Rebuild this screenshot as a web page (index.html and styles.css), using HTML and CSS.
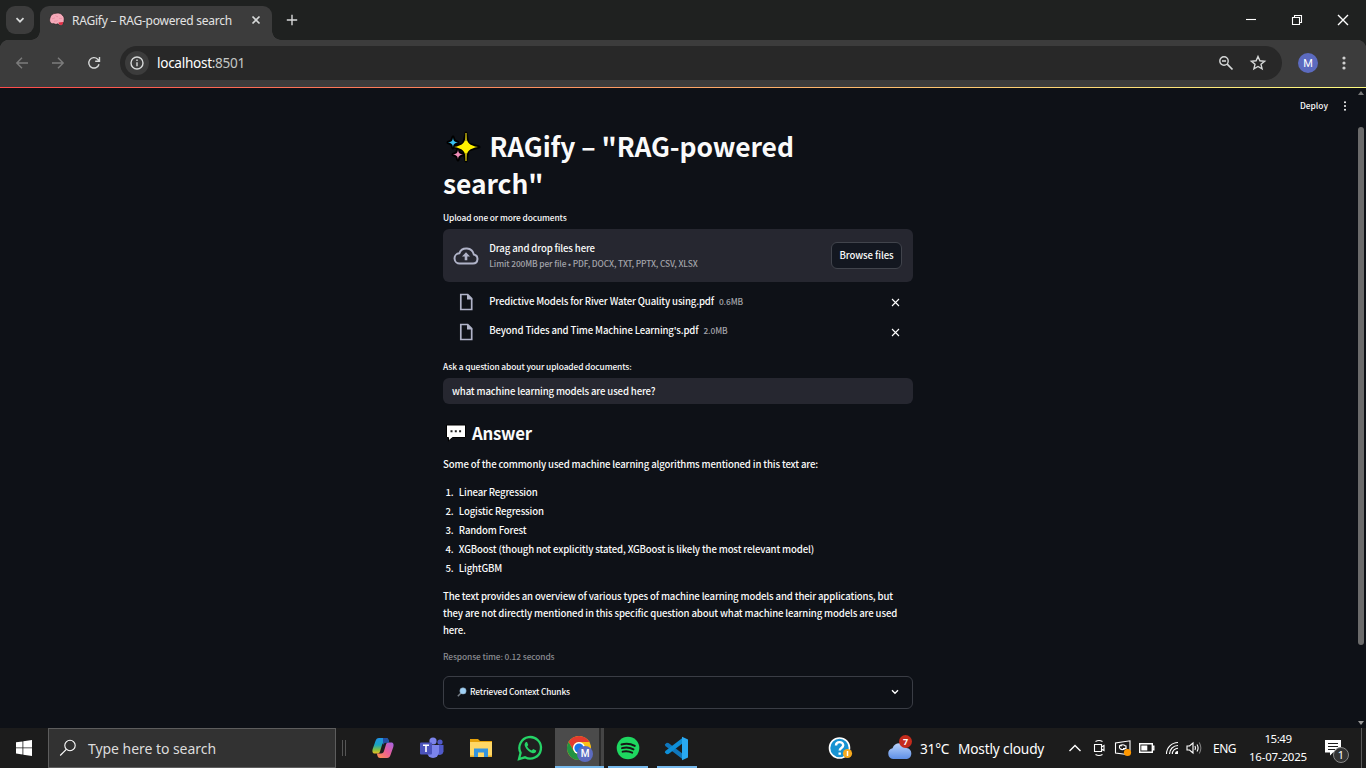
FILE: index.html
```html
<!DOCTYPE html>
<html lang="en">
<head>
<meta charset="utf-8">
<title>RAGify – RAG-powered search</title>
<link rel="stylesheet" href="styles.css">
</head>
<body>
<div class="screen">
  <header class="titlebar">
    <div class="tab-menu"><svg width="10" height="10" viewBox="0 0 10 10"><path d="M1.500 3.200 5 6.700 8.500 3.200" class="line bold"/></svg></div>
    <div class="tab">
      <svg class="brain" width="16" height="16" viewBox="0 0 16 16"><path d="M1.500 10.500C.3 9 .5 7.500 1 6 1.500 3 4 1.300 7 1.300c3-.8 5.800.5 6.500 2.200 1.500 1 2 3 1.500 5 .2 1.200-.3 2-1 2.500 0 1.800-1.300 2.800-3 2.300L8.800 11.800c-1.500.8-3 .5-4-.3-1.200.5-2.500.2-3.300-1Z" fill="#f6a9b9" stroke="#1c1c1c" stroke-width=".6"/><path d="m9.500 10.500 4.500-.5c.3 2-.8 3.200-2 3-1.200 0-2-.7-2.500-2.500Z" fill="#dd2e44"/><path d="M3 7c1-1 2 0 3-1.500M6.500 3.500c1 .5 1 1.500 2.500 1M5 9.500c1.500-1 2 .2 3.500-1M10 6.500c1-.5 1.500.5 3-.3" fill="none" stroke="#e58a9e" stroke-width=".8"/></svg>
      <span class="tab-title">RAGify – RAG-powered search</span>
      <svg class="tab-x" width="10" height="10" viewBox="0 0 10 10"><path d="m1.500 1.500 7 7m0-7-7 7" class="line bold"/></svg>
    </div>
    <svg class="new-tab" width="12" height="12" viewBox="0 0 12 12"><path d="M6 .8v10.400M.8 6h10.400" class="line"/></svg>
    <div class="win">
      <svg width="12" height="12" viewBox="0 0 12 12"><path d="M1 5.500h10" class="line white thin"/></svg>
      <svg width="12" height="12" viewBox="0 0 12 12"><path d="M1.500 3.500h7v7h-7zM3.500 3.500v-2h7v7h-2" class="line white thin"/></svg>
      <svg width="12" height="12" viewBox="0 0 12 12"><path d="m1 1 10 10m0-10L1 11" class="line white"/></svg>
    </div>
  </header>
  <nav class="toolbar">
    <svg width="14" height="14" viewBox="0 0 14 14"><path d="M13 7H2m5-5.200L1.800 7 7 12.200" class="line dim"/></svg>
    <svg width="14" height="14" viewBox="0 0 14 14"><path d="M1 7h11M7 1.800 12.200 7 7 12.200" class="line dim"/></svg>
    <svg width="14" height="14" viewBox="0 0 14 14"><path d="M12 8.200a5.200 5.200 0 1 1-1.300-5L12.400 5M12.500 1v4.300H8.200" class="line"/></svg>
    <div class="omnibox">
      <span class="site"><svg width="14" height="14" viewBox="0 0 14 14"><circle cx="7" cy="7" r="6" class="line"/><path d="M7 6.200v4M7 3.600v1.500" class="line"/></svg></span>
      <span class="url">localhost<span class="port">:8501</span></span>
      <svg class="zoom" width="16" height="16" viewBox="0 0 16 16"><circle cx="6" cy="6" r="4.200" class="line"/><path d="M9.200 9.200 14.500 14.500M4 6h4" class="line bold"/></svg>
      <svg width="16" height="16" viewBox="0 0 16 16"><path d="m8 1.500 1.900 4.300 4.700.4-3.600 3.100 1.100 4.600L8 11.500l-4.100 2.400L5 9.300 1.400 6.200l4.700-.4Z" class="line"/></svg>
    </div>
    <span class="avatar">M</span>
    <svg class="kebab" width="4" height="16" viewBox="0 0 4 16"><circle cx="2" cy="3" r="1.600"/><circle cx="2" cy="8" r="1.600"/><circle cx="2" cy="13" r="1.600"/></svg>
  </nav>
  <main class="page">
    <div class="app-head"><span class="deploy">Deploy</span><svg width="4" height="10" viewBox="0 0 4 10"><circle cx="2" cy="1.300" r="1"/><circle cx="2" cy="5" r="1"/><circle cx="2" cy="8.700" r="1"/></svg></div>
    <div class="scroll"><i class="up"></i><i class="thumb"></i><i class="down"></i></div>
    <div class="column">
      <h1><svg class="sparkles" width="34" height="34" viewBox="0 0 34 34"><g stroke="#000" stroke-width="3" stroke-linejoin="round"><path d="M20 2 22 13 33 16 22 19 20 30 17.500 19 9 16 17.500 13Z"/><path d="m7 6 1.500 4L12 11.500 8.500 13 7 17l-1.500-4L2 11.500 5.500 10ZM12 18l1.500 4L17 23.500 13.500 25 12 29l-1.500-4L7 23.500 10.500 22Z"/></g><path d="M20 4c.8 8 3.500 10.500 12 12-8.500 1.500-11.200 4-12 12-.8-8-3.500-10.500-12-12 8.500-1.500 11.200-4 12-12Z" fill="#fff100"/><path d="M19.200 2h1.600v8h-1.600zM19.200 22h1.600v8h-1.600z" fill="#a89b0c"/><path d="M7 6.500c.4 3.500 1.500 4.500 5 5-3.500.5-4.600 1.500-5 5-.4-3.500-1.500-4.500-5-5 3.500-.5 4.600-1.500 5-5Z" fill="#37c2f2"/><path d="M12 18.500c.4 3.500 1.500 4.500 5 5-3.500.5-4.600 1.500-5 5-.4-3.500-1.500-4.500-5-5 3.500-.5 4.600-1.500 5-5Z" fill="#f08cb8"/></svg>RAGify – "RAG-powered<br>search"</h1>
      <p class="label">Upload one or more documents</p>
      <section class="drop">
        <svg width="26" height="20" viewBox="0 0 26 20"><path d="M7 17.500h13a4.600 4.600 0 0 0 .8-9.100A7.600 7.600 0 0 0 6.300 7.300 5.100 5.100 0 0 0 7 17.500Z" fill="none" stroke="#b0b3c8" stroke-width="2"/><path d="M13 6.200 17 10.500h-2.700v3.700h-2.600v-3.700H9Z" fill="#b0b3c8"/></svg>
        <div class="drop-text"><span class="body">Drag and drop files here</span><span class="small">Limit 200MB per file • PDF, DOCX, TXT, PPTX, CSV, XLSX</span></div>
        <button class="browse">Browse files</button>
      </section>
      <div class="files">
        <div class="file"><svg width="14" height="18" viewBox="0 0 14 18"><path d="M1.800 1.500h6.900l4 4v11H1.800Z" class="doc"/><path d="M8 1v5.500h5.500Z" fill="#b0b3c8"/></svg><span class="body">Predictive Models for River Water Quality using.pdf</span><span class="small">0.6MB</span><svg class="x" width="9" height="9" viewBox="0 0 9 9"><path d="m1 1 7 7m0-7L1 8" class="line white thin"/></svg></div>
        <div class="file"><svg width="14" height="18" viewBox="0 0 14 18"><path d="M1.800 1.500h6.900l4 4v11H1.800Z" class="doc"/><path d="M8 1v5.500h5.500Z" fill="#b0b3c8"/></svg><span class="body">Beyond Tides and Time Machine Learning's.pdf</span><span class="small">2.0MB</span><svg class="x" width="9" height="9" viewBox="0 0 9 9"><path d="m1 1 7 7m0-7L1 8" class="line white thin"/></svg></div>
      </div>
      <p class="label ask">Ask a question about your uploaded documents:</p>
      <div class="input"><span class="body">what machine learning models are used here?</span></div>
      <h2><svg width="22" height="18" viewBox="0 0 22 18"><path d="M1.500 1h19v12.500H7.500L3.500 17v-3.500h-2Z" fill="#fff" stroke="#000" stroke-width="1"/><path d="M5.500 6.200h2v2h-2zm4.300 0h2v2h-2zm4.300 0h2v2h-2z" fill="#222"/></svg>Answer</h2>
      <p class="para">Some of the commonly used machine learning algorithms mentioned in this text are:</p>
      <ol>
        <li>Linear Regression</li>
        <li>Logistic Regression</li>
        <li>Random Forest</li>
        <li>XGBoost (though not explicitly stated, XGBoost is likely the most relevant model)</li>
        <li>LightGBM</li>
      </ol>
      <p class="para">The text provides an overview of various types of machine learning models and their applications, but<br>they are not directly mentioned in this specific question about what machine learning models are used<br>here.</p>
      <p class="response">Response time: 0.12 seconds</p>
      <div class="expander"><svg width="10" height="10" viewBox="0 0 10 10"><path d="M.8 9.200 4.500 5.500" stroke="#777f88" stroke-width="1.500"/><circle cx="6" cy="3.900" r="3.200" fill="#9fd0f5" stroke="#7e95a8" stroke-width=".5"/></svg><span>Retrieved Context Chunks</span><svg class="chev" width="8" height="6" viewBox="0 0 8 6"><path d="m1 1.300 3 3 3-3" class="line white"/></svg></div>
    </div>
  </main>
  <footer class="taskbar">
    <div class="start"><svg width="16" height="16" viewBox="0 0 16 16"><path d="M0 2.300 6.500 1.400V7.500H0zM7.300 1.300 16 0v7.500H7.300zM0 8.300h6.500v6.200L0 13.600zM7.300 8.300H16V16l-8.700-1.300z" fill="#fff"/></svg></div>
    <div class="search"><svg width="18" height="18" viewBox="0 0 18 18"><circle cx="11" cy="6.500" r="5.200" class="line white thin"/><path d="M7.300 10.300 1.200 16.500" class="line white thin"/></svg><span>Type here to search</span></div>
    <i class="grip"></i>
    <div class="apps">
      <div class="app"><svg width="24" height="24" viewBox="0 0 24 24"><defs><linearGradient id="ca" x1="0" y1="0" x2="0" y2="1"><stop offset="0" stop-color="#2093e8"/><stop offset=".45" stop-color="#1ba5be"/><stop offset=".75" stop-color="#7fbf45"/><stop offset="1" stop-color="#ecc020"/></linearGradient><linearGradient id="cb" x1="1" y1="0" x2="0" y2="1"><stop offset="0" stop-color="#a164e8"/><stop offset=".5" stop-color="#ea5d96"/><stop offset="1" stop-color="#ff9548"/></linearGradient></defs><path d="M8 2h7c1.500 0 2 .8 2.500 2l.7 2.500H14c-2 0-2.500 1-3 2.500L9 15.500c-.5 1.500-1.200 2-2.500 2H4c-2.500 0-3-2-2.300-4.500L4.500 5C5.200 3 6 2 8 2Z" fill="url(#ca)"/><path d="M16 22H9c-1.500 0-2-.8-2.500-2l-.6-2.500H10c2 0 2.500-1 3-2.500l2-6.500c.5-1.500 1.200-2 2.500-2H20c2.500 0 3 2 2.300 4.500L19.500 19c-.7 2-1.500 3-3.500 3Z" fill="url(#cb)"/><path d="M12 2h3c1.500 0 2 .8 2.500 2l.7 2.500H14L12 9Z" fill="#234fa5"/></svg></div>
      <div class="app"><svg width="24" height="24" viewBox="0 0 24 24"><circle cx="20" cy="6" r="2.600" fill="#5059c9"/><circle cx="13" cy="5" r="3.600" fill="#7b83eb"/><path d="M16 9h7.500v6.500a4 4 0 0 1-7 2Z" fill="#5059c9"/><path d="M7 9h12v7a6 6 0 0 1-12 0Z" fill="#7b83eb"/><rect y="6.500" width="12" height="12" rx="1" fill="#4b53bc"/><path d="M3 9.300h6M6 9.300V16" stroke="#fff" stroke-width="1.600"/></svg></div>
      <div class="app"><svg width="24" height="24" viewBox="0 0 24 24"><path d="M1 3h8l2 2h12v4H1z" fill="#e5a10a"/><path d="M1 6h22v15H1z" fill="#ffd765"/><path d="M5 12.500h14V21h-4v-4.500H9V21H5z" fill="#3494df"/><path d="M1 19.500h4V21H1zM19 19.500h4V21h-4z" fill="#e8ad28"/></svg></div>
      <div class="app"><svg width="26" height="26" viewBox="0 0 26 26"><path d="m2 24 1.600-6.200A10.800 10.800 0 1 1 8 22.300Z" fill="#202020" stroke="#25d366" stroke-width="2.300"/><path d="M9 7c-1.500 1-1.800 2.800-.8 4.800 1.500 3.200 4.200 5.500 7.500 6.400 1.800.4 3.600-.8 3.500-2.700l-3-1.500-1.500 1.500c-2-.7-3.600-2.200-4.500-4l1.100-1.500L10 7Z" fill="#25d366"/></svg></div>
      <div class="app active"><svg width="26" height="26" viewBox="0 0 26 26"><circle cx="13" cy="13" r="12" fill="#fbc116"/><path d="M2.600 7A12 12 0 0 1 23.400 7H13a6 6 0 0 0-5.200 9Z" fill="#e33b2e"/><path d="M2.600 7A12 12 0 0 0 13 25l5.200-9a6 6 0 0 1-10.400 0Z" fill="#229342"/><circle cx="13" cy="13" r="6" fill="#fff"/><circle cx="13" cy="13" r="4.600" fill="#1a73e8"/></svg><b class="badge">M</b></div>
      <div class="app open"><svg width="24" height="24" viewBox="0 0 24 24"><circle cx="12" cy="12" r="11.300" fill="#1ed760"/><path d="M5.500 8.500q7-2 13.300 1.400M6 12.200q6-1.700 11.500 1.200M6.600 15.700q5-1.200 9.600 1" fill="none" stroke="#161616" stroke-width="1.900" stroke-linecap="round"/></svg></div>
      <div class="app open"><svg width="25" height="25" viewBox="0 0 25 25"><path d="M.8 8.500 2.800 6.800 4.500 7 19 18v5.500L1.300 10Z" fill="#0f77bd"/><path d="M.8 16.500 2.800 18.200 4.500 18 19 7V1.500L1.300 15Z" fill="#0e8fd8"/><path d="m18 .8 6 2.700v18l-6 2.700Z" fill="#29a9f2"/></svg></div>
    </div>
    <div class="tray">
      <svg class="help" width="25" height="25" viewBox="0 0 25 25"><circle cx="11.500" cy="12" r="10" fill="#1793d2" stroke="#fff" stroke-width="1.600"/><path d="M8 9.500C8 5 15.200 5 15.200 9.300c0 2.700-3.500 2.700-3.500 5.200m0 2v2.300" fill="none" stroke="#fff" stroke-width="2.400"/><circle cx="19.500" cy="17.500" r="4.600" fill="#f7a91c"/><path d="M19.500 15v5" stroke="#fff" stroke-width="1.500"/></svg>
      <div class="weather"><svg width="26" height="24" viewBox="0 0 26 24"><defs><linearGradient id="cl" x1="0" y1="0" x2="0" y2="1"><stop offset="0" stop-color="#b9d3fb"/><stop offset="1" stop-color="#5e8fe6"/></linearGradient></defs><path d="M6 23a5.500 5.500 0 0 1-.5-10.800A7.500 7.500 0 0 1 19.500 12 5.600 5.600 0 0 1 20 23Z" fill="url(#cl)"/></svg><b class="alert">7</b></div>
      <span class="temp">31°C</span><span class="cond">Mostly cloudy</span>
      <svg class="caret" width="14" height="10" viewBox="0 0 14 10"><path d="m1.500 8 5.500-5.500L12.500 8" class="line white"/></svg>
      <svg class="meet" width="12" height="18" viewBox="0 0 12 18"><path d="M1.500 5.500h7v7h-7zM8.500 8l2.500-1.500v5L8.500 10M2.500 2.500q3.500-2 7 0M2.500 15.500q3.500 2 7 0" class="line white thin"/></svg>
      <svg class="upd" width="18" height="18" viewBox="0 0 18 18"><path d="M13 15.500 1.500 14V4L16 1.800v10M5.500 9.500V6.800h2.700M12 6.500v3H9M5.500 7q3-2.500 6 0M6 9.500q2.500 2.500 6-.5" class="line white thin"/><circle cx="13.500" cy="13.500" r="3.600" fill="#ff9800"/></svg>
      <svg class="bat" width="16" height="10" viewBox="0 0 16 10"><path d="M.7.7h12.600v8.600H.7zM13.500 3.200h1.300v3.600h-1.300" class="line white"/><path d="M2.300 2.500h6v5h-6z" fill="#fff"/></svg>
      <svg class="wifi" width="14" height="14" viewBox="0 0 14 14"><path d="M1.500 13A11.500 11.500 0 0 1 13 1.500M4.500 13A8.500 8.500 0 0 1 13 4.500M7.300 13A5.700 5.700 0 0 1 13 7.300" class="line white thin"/><path d="M10 13a3 3 0 0 1 3-3v3Z" fill="#fff"/></svg>
      <svg class="vol" width="17" height="14" viewBox="0 0 17 14"><path d="M1 5h2.500L7 2v10L3.500 9H1zM9 5q1 2 0 4M11 3.500q2.200 3.500 0 7" class="line white thin"/><path d="M13.200 1.500q3.300 5.500 0 11" class="line dim thin"/></svg>
      <span class="lang">ENG</span>
      <div class="clock"><span class="time">15:49</span><span>16-07-2025</span></div>
      <div class="notes"><svg width="16" height="16" viewBox="0 0 16 16"><path d="M0 0h16v12.500H8L5 15.500v-3H0Z" fill="#fff"/><path d="M3 3.500h10M3 6.500h10M3 9.500h7" stroke="#1c1c1c" stroke-width="1.200"/></svg><b class="count">1</b></div>
      <i class="peek"></i>
    </div>
  </footer>
</div>
</body>
</html>
```
FILE: styles.css
```css
*, ::before, ::after { box-sizing: border-box; }
body { margin: 0; background: #0e1117; }
svg { display: block; flex: none; overflow: visible; }
h1, h2, p, ol { margin: 0; padding: 0; }
.screen { width: 1366px; height: 768px; overflow: hidden; display: flex; flex-direction: column; font-family: "Noto Sans", sans-serif; color: #fff; white-space: nowrap; }
.line { fill: none; stroke: #d7d9d9; stroke-width: 1.4; }
.bold { stroke-width: 1.7; }
.thin { stroke-width: 1.1; }
.white { stroke: #fff; }
.dim { stroke: #7c7c7c; }

.titlebar { height: 40px; flex: none; background: #1f2120; display: flex; align-items: center; }
.tab-menu { width: 28px; height: 28px; margin-left: 6px; border-radius: 9px; background: #3c3c3c; display: grid; place-items: center; }
.tab { position: relative; width: 232px; height: 34px; margin: 6px 0 0 6px; padding: 0 11px 6px 9px; border-radius: 9px 9px 0 0; background: #3c3c3c; display: flex; align-items: center; }
.tab::before, .tab::after { content: ""; position: absolute; bottom: 0; width: 9px; height: 9px; }
.tab::before { right: 100%; background: radial-gradient(circle at 0 0, transparent 8.5px, #3c3c3c 9px); }
.tab::after { left: 100%; background: radial-gradient(circle at 100% 0, transparent 8.5px, #3c3c3c 9px); }
.tab-title { margin: 1px 0 0 7px; font-size: 12px; line-height: 16px; letter-spacing: -0.238px; color: #e3e3e3; }
.tab-x { margin-left: auto; }
.new-tab { margin-left: 14px; }
.win { margin-left: auto; padding-right: 17px; display: flex; gap: 34px; }

.toolbar { height: 47px; flex: none; background: radial-gradient(circle at 9px 9px, #3c3c3c 9px, #1f2120 9.5px) 0 0 / 9px 9px no-repeat, radial-gradient(circle at 0 9px, #3c3c3c 9px, #1f2120 9.5px) 100% 0 / 9px 9px no-repeat, #3c3c3c; display: flex; align-items: center; padding: 0 20px 1px 15px; }
.toolbar > svg + svg { margin-left: 22px; }
.toolbar > svg.kebab { margin-left: 24px; fill: #d0d0d0; }
.omnibox { width: 1162px; height: 34px; margin-left: 19px; padding: 0 16px 0 5px; border-radius: 17px; background: #282828; display: flex; align-items: center; }
.site { width: 24px; height: 24px; border-radius: 50%; background: #3c3c3c; display: grid; place-items: center; }
.url { margin-left: 8px; font-size: 13.6px; line-height: 20px; letter-spacing: -0.3px; color: #fff; }
.port { color: #c4c7c5; }
.zoom { margin: 0 16px 0 auto; }
.avatar { width: 20px; height: 20px; margin-left: 16px; border-radius: 50%; background: #5c6bc0; font: 11px/21px Roboto, sans-serif; text-align: center; }

.page { position: relative; height: 641px; flex: none; background: #0e1117; font-family: "Noto Sans CJK JP", sans-serif; color: #fafafa; font-weight: 500; }
.page::before { content: ""; display: block; height: 1px; background: linear-gradient(90deg, #ff4b4b, #fffd80); }
.app-head { position: absolute; right: 19px; top: 12px; display: flex; gap: 15px; align-items: center; font-size: 8.4px; line-height: 14px; }
.deploy { margin-top: -1px; }
.app-head svg { fill: #fafafa; }
.scroll { position: absolute; right: 0; top: 1px; bottom: 0; width: 9px; }
.scroll i { position: absolute; left: 1px; }
.up { top: 3px; border: 3px solid transparent; border-top: 0; border-bottom: 4px solid #777; }
.down { bottom: 3px; border: 3px solid transparent; border-bottom: 0; border-top: 4px solid #999; }
.thumb { top: 39px; width: 6px; height: 518px; border-radius: 3px; background: #6b6b6b; }
.column { width: 470px; margin-left: 443px; padding-top: 39.5px; }
h1 { height: 71.5px; font-size: 26.4px; line-height: 35.4px; font-weight: 700; letter-spacing: -0.06px; }
h1 .sparkles { display: inline-block; vertical-align: -8px; margin: 0 9.5px 0 3px; }
.label { margin-top: 11px; font-size: 8.4px; line-height: 14px; height: 14px; letter-spacing: -0.1px; }
.body { font-size: 9.6px; letter-spacing: -0.142px; }
.small { font-size: 8.4px; letter-spacing: -0.11px; color: #a3a4aa; }
.drop { margin-top: 5px; height: 53px; border-radius: 6px; background: #262730; display: flex; align-items: center; padding: 0 11px 0 10px; }
.drop-text { margin-left: 10.3px; display: flex; flex-direction: column; line-height: 16px; }
.drop-text .small { margin-top: -1px; }
.browse { margin-left: auto; width: 71px; height: 27px; padding: 0 0 1px; border: 1px solid #41444c; border-radius: 6px; background: #131720; color: #fafafa; font: 500 9.6px/24px "Noto Sans CJK JP", sans-serif; letter-spacing: -0.1px; }
.files { padding: 5px 13px 0 16.3px; }
.file { height: 30px; display: flex; align-items: center; }
.file span { padding-bottom: 2px; }
.file + .file span { padding-bottom: 4px; }
.file .body { margin-left: 16px; }
.file .small { margin-left: 5px; }
.x { margin-left: auto; }
.doc { fill: none; stroke: #b0b3c8; stroke-width: 1.7; }
.ask { margin-top: 12px; }
.input { margin-top: 5px; height: 26px; border-radius: 6px; background: #262730; padding-left: 9px; display: flex; align-items: center; }
h2 { display: flex; align-items: center; gap: 5px; margin: 17px 0 0 2px; height: 24px; font-size: 16.8px; line-height: 24px; font-weight: 700; letter-spacing: -0.25px; }
.para { margin-top: 11px; font-size: 9.6px; line-height: 17px; letter-spacing: -0.134px; }
ol { list-style: none; counter-reset: n; margin-top: 10px; }
li { counter-increment: n; height: 19px; display: flex; align-items: center; font-size: 9.6px; line-height: 19px; letter-spacing: -0.14px; }
li::before { content: counter(n) "."; width: 15.8px; padding-left: 2.4px; }
ol + .para { margin-top: 10px; }
.response { margin-top: 10px; font-size: 8.4px; line-height: 14px; letter-spacing: -0.109px; color: #8a8b90; }
.expander { margin-top: 13px; height: 33px; border: 1px solid #3a3d45; border-radius: 6px; display: flex; align-items: center; padding: 0 13px; gap: 3px; font-size: 8.4px; letter-spacing: -0.133px; }
.expander > svg:first-child { margin-top: -2px; }
.expander span { padding-bottom: 3px; }
.expander .chev { margin: -1px 0 0 auto; }

.taskbar { height: 40px; flex: none; background: #1c1c1c; display: flex; }
.start { width: 48px; display: grid; place-items: center; }
.search { width: 288px; border: 1px solid #5d5d5d; background: #323232; display: flex; align-items: center; gap: 11px; padding-left: 10px; font-size: 14px; letter-spacing: -0.046px; color: #dcdcdc; }
.grip { width: 4px; height: 16px; margin: 12px 0 0 6px; border: solid #555; border-width: 0 1px; }
.apps { display: flex; margin-left: 13px; }
.app { position: relative; width: 49px; padding-right: 2px; display: grid; place-items: center; }
.active { background: linear-gradient(90deg, #4b4b4b 44px, #2b2b2b 44px 46px, #454545 46px); border-bottom: 2px solid #76b9ed; }
.active svg { margin-top: 2px; }
.open::after { content: ""; position: absolute; bottom: 0; left: 4px; width: 40px; height: 2px; background: #76b9ed; }
.badge { position: absolute; left: 22px; top: 18px; width: 16px; height: 16px; border-radius: 50%; background: #5c6bc0; font: 500 10px/16px Roboto, sans-serif; text-align: center; }
.tray { flex: 1; display: flex; align-items: center; padding-left: 126px; font-size: 13.7px; }
.weather { position: relative; margin-left: 34px; }
.alert { position: absolute; right: 1px; top: -1px; width: 13px; height: 13px; border-radius: 50%; background: #c42b1c; font: 700 9px/13px "Noto Sans", sans-serif; text-align: center; }
.temp { margin-left: 7px; width: 38px; letter-spacing: -0.25px; }
.cond { width: 87px; letter-spacing: -0.18px; }
.caret { margin-left: 23px; }
.meet { margin-left: 11px; }
.upd { margin-left: 9px; }
.bat { margin-left: 7px; }
.wifi { margin-left: 10px; }
.vol { margin-left: 7px; }
.lang { margin-left: 10px; font-size: 12px; width: 24px; letter-spacing: -0.5px; }
.clock { margin-left: 12px; width: 58px; display: flex; flex-direction: column; align-items: center; font-size: 11.5px; line-height: 18px; letter-spacing: -0.203px; }
.time { letter-spacing: -0.48px; }
.notes { position: relative; margin-left: 18px; }
.count { position: absolute; left: 8px; top: 7px; width: 16px; height: 16px; border: 1px solid #888; border-radius: 50%; background: #333; font: 400 11px/14px "Noto Sans", sans-serif; text-align: center; }
.peek { width: 1px; height: 40px; margin: 0 4px 0 auto; background: #5a5a5a; }
```
